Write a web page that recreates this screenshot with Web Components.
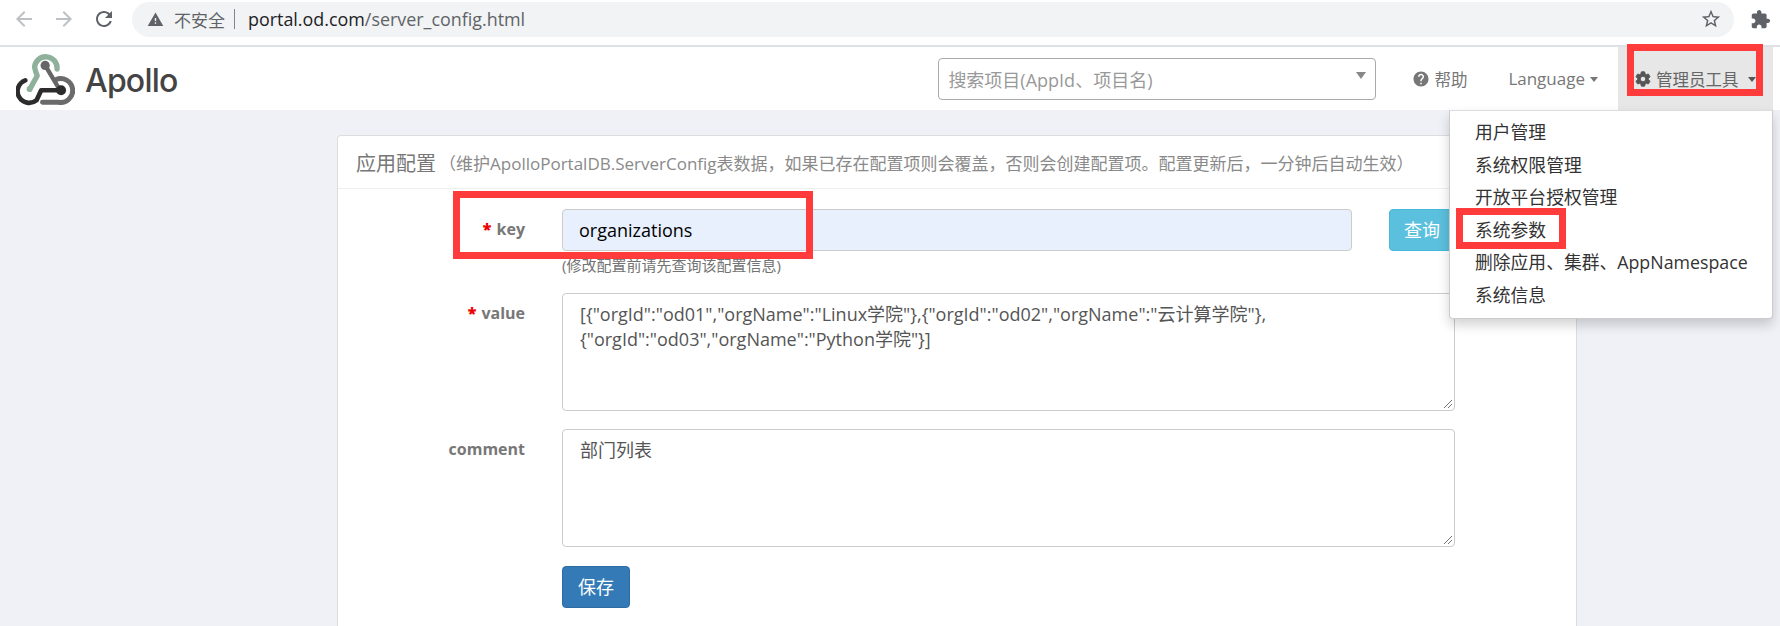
<!DOCTYPE html>
<html lang="zh">
<head>
<meta charset="utf-8">
<title>Apollo</title>
<style>
  html, body { margin: 0; height: 626px; overflow: hidden; }
  body {
    position: relative;
    background: #eff1f7;
    color: #555;
    font-family: "Open Sans", "Noto Sans CJK SC", sans-serif;
  }
</style>
</head>
<body>
<browser-bar url-host="portal.od.com" url-path="/server_config.html"></browser-bar>
<app-navbar>
  <nav-menu>
    <menu-item>用户管理</menu-item>
    <menu-item>系统权限管理</menu-item>
    <menu-item>开放平台授权管理</menu-item>
    <menu-item>系统参数</menu-item>
    <menu-item>删除应用、集群、AppNamespace</menu-item>
    <menu-item>系统信息</menu-item>
  </nav-menu>
</app-navbar>
<config-panel heading="应用配置" note="（维护ApolloPortalDB.ServerConfig表数据，如果已存在配置项则会覆盖，否则会创建配置项。配置更新后，一分钟后自动生效）">
  <form-row label="key" required hint="(修改配置前请先查询该配置信息)">
    <text-field filled>organizations</text-field>
    <app-button slot="after" kind="info">查询</app-button>
  </form-row>
  <form-row label="value" required>
    <text-area rows-height="118">[{"orgId":"od01","orgName":"Linux学院"},{"orgId":"od02","orgName":"云计算学院"},
{"orgId":"od03","orgName":"Python学院"}]</text-area>
  </form-row>
  <form-row label="comment">
    <text-area rows-height="118">部门列表</text-area>
  </form-row>
  <form-row>
    <app-button kind="primary">保存</app-button>
  </form-row>
</config-panel>

<red-mark x="1627" y="44" w="136" h="52"></red-mark>
<red-mark x="453" y="191" w="360" h="68"></red-mark>
<red-mark x="1456" y="208" w="110" h="41"></red-mark>

<script>
const icon = (d, size, color, extra = '') =>
  `<svg width="${size}" height="${size}" viewBox="0 0 24 24" fill="${color}" ${extra}><path d="${d}"/></svg>`;

const ICONS = {
  back: 'M20 11H7.83l5.59-5.59L12 4l-8 8 8 8 1.41-1.41L7.83 13H20v-2z',
  forward: 'M12 4l-1.41 1.41L16.17 11H4v2h12.17l-5.58 5.59L12 20l8-8z',
  reload: 'M17.65 6.35C16.2 4.9 14.21 4 12 4c-4.42 0-7.99 3.58-7.99 8s3.57 8 7.99 8c3.73 0 6.84-2.55 7.73-6h-2.08c-.82 2.33-3.04 4-5.65 4-3.31 0-6-2.69-6-6s2.69-6 6-6c1.66 0 3.14.69 4.22 1.78L13 11h7V4l-2.35 2.35z',
  warning: 'M1 21h22L12 2 1 21zm12-3h-2v-2h2v2zm0-4h-2v-4h2v4z',
  star: 'M22 9.24l-7.19-.62L12 2 9.19 8.63 2 9.24l5.46 4.73L5.82 21 12 17.27 18.18 21l-1.63-7.03L22 9.24zM12 15.4l-3.76 2.27 1-4.28-3.32-2.88 4.38-.38L12 6.1l1.71 4.04 4.38.38-3.32 2.88 1 4.28L12 15.4z',
  puzzle: 'M20.5 11H19V7c0-1.1-.9-2-2-2h-4V3.5C13 2.12 11.88 1 10.5 1S8 2.12 8 3.5V5H4c-1.1 0-1.99.9-1.99 2v3.8H3.5c1.49 0 2.7 1.21 2.7 2.7s-1.21 2.7-2.7 2.7H2V20c0 1.1.9 2 2 2h3.8v-1.5c0-1.49 1.21-2.7 2.7-2.7 1.49 0 2.7 1.21 2.7 2.7V22H17c1.1 0 2-.9 2-2v-4h1.5c1.38 0 2.5-1.12 2.5-2.5S21.88 11 20.5 11z',
  help: 'M12 2C6.48 2 2 6.48 2 12s4.48 10 10 10 10-4.48 10-10S17.52 2 12 2zm1 17h-2v-2h2v2zm2.07-7.75l-.9.92C13.45 12.9 13 13.5 13 15h-2v-.5c0-1.1.45-2.1 1.17-2.83l1.24-1.26c.37-.36.59-.86.59-1.41 0-1.1-.9-2-2-2s-2 .9-2 2H8c0-2.21 1.79-4 4-4s4 1.79 4 4c0 .88-.36 1.68-.93 2.25z',
  cog: 'M19.14 12.94c.04-.3.06-.61.06-.94 0-.32-.02-.64-.07-.94l2.03-1.58c.18-.14.23-.41.12-.61l-1.92-3.32c-.12-.22-.37-.29-.59-.22l-2.39.96c-.5-.38-1.03-.7-1.62-.94l-.36-2.54c-.04-.24-.24-.41-.48-.41h-3.84c-.24 0-.43.17-.47.41l-.36 2.54c-.59.24-1.13.57-1.62.94l-2.39-.96c-.22-.08-.47 0-.59.22L2.74 8.87c-.12.21-.08.47.12.61l2.03 1.58c-.05.3-.09.63-.09.94s.02.64.07.94l-2.03 1.58c-.18.14-.23.41-.12.61l1.92 3.32c.12.22.37.29.59.22l2.39-.96c.5.38 1.03.7 1.62.94l.36 2.54c.05.24.24.41.48.41h3.84c.24 0 .44-.17.47-.41l.36-2.54c.59-.24 1.13-.56 1.62-.94l2.39.96c.22.08.47 0 .59-.22l1.92-3.32c.12-.22.07-.47-.12-.61l-2.01-1.58zM12 15.6c-1.98 0-3.6-1.62-3.6-3.6s1.62-3.6 3.6-3.6 3.6 1.62 3.6 3.6-1.62 3.6-3.6 3.6z'
};

class BrowserBar extends HTMLElement {
  connectedCallback() {
    this.attachShadow({ mode: 'open' }).innerHTML = `
      <style>
        :host {
          display: flex;
          align-items: center;
          box-sizing: border-box;
          height: 47px;
          padding: 0 6px 7px 12px;
          background: #fff;
          border-bottom: 2px solid #dee1e6;
          font-family: "Open Sans", "Noto Sans CJK SC", sans-serif;
        }
        .nav { display: flex; gap: 16px; align-items: center; }
        svg { display: block; flex: none; }
        .omnibox {
          display: flex;
          align-items: center;
          width: 1602px;
          height: 35px;
          margin-left: 16px;
          padding: 0 12px 0 15px;
          box-sizing: border-box;
          background: #f1f3f4;
          border-radius: 18px;
          font-size: 17px;
          color: #5f6368;
          white-space: nowrap;
        }
        .warn { margin-right: 10px; }
        .sep { width: 1px; height: 20px; background: #80868b; margin: 0 13px 0 9px; }
        .url { font-size: 17.9px; }
        .host { color: #202124; }
        .star { margin-left: auto; }
        .ext { margin-left: 16px; }
      </style>
      <div class="nav">
        ${icon(ICONS.back, 24, '#bdc1c6')}
        ${icon(ICONS.forward, 24, '#bdc1c6')}
        ${icon(ICONS.reload, 24, '#5f6368')}
      </div>
      <div class="omnibox">
        ${icon(ICONS.warning, 17, '#5f6368', 'class="warn"')}
        <span>不安全</span><span class="sep"></span>
        <span class="url"><span class="host">${this.getAttribute('url-host')}</span>${this.getAttribute('url-path')}</span>
        ${icon(ICONS.star, 22, '#5f6368', 'class="star"')}
      </div>
      ${icon(ICONS.puzzle, 21, '#5f6368', 'class="ext"')}
    `;
  }
}

class AppNavbar extends HTMLElement {
  connectedCallback() {
    this.attachShadow({ mode: 'open' }).innerHTML = `
      <style>
        :host {
          display: flex;
          align-items: center;
          position: relative;
          height: 63px;
          padding: 0 7px 0 16px;
          background: #fff;
          font-family: "Open Sans", "Noto Sans CJK SC", sans-serif;
          color: #777;
        }
        .brand { display: flex; align-items: center; gap: 10px; }
        .brand svg { display: block; }
        .brand span {
          font: 500 32px/1 Inter, "Open Sans", sans-serif;
          letter-spacing: -.8px;
          color: #444;
          margin-top: 4px;
        }
        .search {
          display: flex;
          align-items: center;
          box-sizing: border-box;
          width: 438px;
          height: 42px;
          margin-left: auto;
          padding: 0 9px;
          border: 1px solid #aaa;
          border-radius: 4px;
          font-size: 18px;
          color: #999;
          white-space: nowrap;
        }
        .search i {
          margin-left: auto;
          margin-bottom: 6px;
          border: 5px solid transparent;
          border-top: 7px solid #888;
          border-bottom: 0;
        }
        .item {
          display: flex;
          align-items: center;
          font-size: 16.5px;
          white-space: nowrap;
        }
        .help { margin-left: 36px; gap: 4px; }
        .lang { margin-left: 41px; gap: 5px; font-size: 17px; }
        .admin {
          align-self: stretch;
          width: 155px;
          box-sizing: border-box;
          margin-left: 20px;
          padding-left: 16px;
          background: #e7e7e7;
          color: #666;
          gap: 4px;
        }
        .caret {
          border: 4px solid transparent;
          border-top: 5px solid currentColor;
          border-bottom: 0;
          margin-top: 2px;
        }
        .admin .caret { margin-left: 5px; color: #555; }
        svg { flex: none; }
      </style>
      <div class="brand">
        <svg width="59" height="56" viewBox="12 12 178 168" fill="none" stroke-linecap="round" stroke-linejoin="round">
          <path d="M136 66A34 34 0 1 0 68 60Q72 78 76 86L54 126" stroke="#8fb09b" stroke-width="16"/>
          <circle cx="53" cy="126" r="9" fill="#8fb09b"/>
          <path d="M132 98A36 36 0 1 1 140 166H92" stroke="#6b6b6b" stroke-width="15"/>
          <path d="M100 55L145 130" stroke="#666" stroke-width="13"/>
          <circle cx="100" cy="55" r="14" fill="#666"/>
          <path d="M40 100A35 35 0 1 0 74 160L88 130H148" stroke="#2c2c2c" stroke-width="14"/>
          <circle cx="148" cy="130" r="15" fill="#2c2c2c"/>
        </svg>
        <span>Apollo</span>
      </div>
      <div class="search">搜索项目(AppId、项目名)<i></i></div>
      <div class="item help">${icon(ICONS.help, 18, '#777')}帮助</div>
      <div class="item lang">Language<span class="caret"></span></div>
      <div class="item admin">${icon(ICONS.cog, 18, '#555', 'stroke="#555" stroke-width="1.2"')}管理员工具<span class="caret"></span></div>
      <slot></slot>
    `;
  }
}

class NavMenu extends HTMLElement {
  connectedCallback() {
    this.attachShadow({ mode: 'open' }).innerHTML = `
      <style>
        :host {
          display: block;
          position: absolute;
          z-index: 5;
          top: 63px;
          right: 7px;
          box-sizing: border-box;
          width: 324px;
          height: 209px;
          padding: 5px 0;
          background: #fff;
          border: 1px solid #ccc;
          border-top-color: #ddd;
          border-radius: 0 0 4px 4px;
          box-shadow: 0 6px 12px rgba(0,0,0,.175);
        }
      </style>
      <slot></slot>
    `;
  }
}

class MenuItem extends HTMLElement {
  connectedCallback() {
    this.attachShadow({ mode: 'open' }).innerHTML = `
      <style>
        :host {
          display: block;
          padding-left: 25px;
          font-size: 17.8px;
          line-height: 32.6px;
          color: #333;
          white-space: nowrap;
        }
      </style>
      <slot></slot>
    `;
  }
}

class ConfigPanel extends HTMLElement {
  connectedCallback() {
    this.attachShadow({ mode: 'open' }).innerHTML = `
      <style>
        :host {
          display: block;
          box-sizing: border-box;
          width: 1240px;
          height: 491px;
          margin: 25px 0 0 337px;
          background: #fff;
          border: 1px solid #ddd;
          border-bottom: 0;
          border-radius: 4px 4px 0 0;
        }
        header {
          height: 53px;
          box-sizing: border-box;
          padding: 0 18px;
          display: flex;
          align-items: center;
          border-bottom: 1px solid #eee;
          color: #777;
          white-space: nowrap;
        }
        h2 { margin: 0; font-size: 20px; font-weight: 400; }
        small { font-size: 17px; color: #8a8a8a; margin-left: 3px; }
        .body { padding-top: 20px; display: grid; row-gap: 18px; }
      </style>
      <header><h2>${this.getAttribute('heading')}</h2><small>${this.getAttribute('note')}</small></header>
      <div class="body"><slot></slot></div>
    `;
  }
}

class FormRow extends HTMLElement {
  connectedCallback() {
    const label = this.getAttribute('label') || '';
    const hint = this.getAttribute('hint');
    this.attachShadow({ mode: 'open' }).innerHTML = `
      <style>
        :host {
          display: grid;
          grid-template-columns: 187px 893px;
          column-gap: 37px;
        }
        label {
          padding-top: 9px;
          text-align: right;
          font-size: 16px;
          line-height: 22px;
          font-weight: 700;
          color: #777;
        }
        label b { color: #e00; margin-right: 1px; }
        .line { display: flex; gap: 37px; }
        .hint { font-size: 15px; line-height: 20px; color: #737373; margin-top: 4px; }
      </style>
      <label>${this.hasAttribute('required') ? '<b>*</b> ' : ''}${label}</label>
      <div>
        <div class="line"><slot></slot><slot name="after"></slot></div>
        ${hint ? `<div class="hint">${hint}</div>` : ''}
      </div>
    `;
  }
}

class TextField extends HTMLElement {
  connectedCallback() {
    this.attachShadow({ mode: 'open' }).innerHTML = `
      <style>
        :host {
          display: flex;
          align-items: center;
          flex: 1;
          box-sizing: border-box;
          height: 42px;
          padding: 0 16px 1px;
          border: 1px solid #ccc;
          border-radius: 4px;
          font-size: 18px;
          color: #000;
        }
        :host([filled]) { background: #e8f0fe; }
      </style>
      <slot></slot>
    `;
  }
}

class TextArea extends HTMLElement {
  connectedCallback() {
    this.attachShadow({ mode: 'open' }).innerHTML = `
      <style>
        :host {
          display: block;
          position: relative;
          flex: 1;
          box-sizing: border-box;
          height: ${this.getAttribute('rows-height')}px;
          padding: 8px 17px;
          border: 1px solid #ccc;
          border-radius: 4px;
          font-size: 18px;
          line-height: 25px;
          color: #555;
        }
        .text { white-space: pre-wrap; }
        svg { position: absolute; right: 1px; bottom: 1px; }
      </style>
      <div class="text"><slot></slot></div>
      <svg width="10" height="10" viewBox="0 0 10 10" stroke="#777" fill="none"><path d="M9 1L1 9M9 5L5 9"/></svg>
    `;
  }
}

class AppButton extends HTMLElement {
  connectedCallback() {
    this.attachShadow({ mode: 'open' }).innerHTML = `
      <style>
        :host {
          display: flex;
          align-items: center;
          justify-content: center;
          box-sizing: border-box;
          width: 68px;
          height: 42px;
          padding-bottom: 2px;
          border-radius: 4px;
          font-size: 18px;
          color: #fff;
        }
        :host([kind="info"]) { width: 66px; background: #5bc0de; border: 1px solid #46b8da; }
        :host([kind="primary"]) { margin-top: 1px; background: #337ab7; border: 1px solid #2e6da4; }
      </style>
      <slot></slot>
    `;
  }
}

// hand-drawn annotation frames of the screenshot, placed on the page as a free overlay
class RedMark extends HTMLElement {
  connectedCallback() {
    const a = n => this.getAttribute(n) + 'px';
    this.attachShadow({ mode: 'open' }).innerHTML = `
      <style>
        :host {
          display: block;
          position: absolute;
          z-index: 9;
          left: ${a('x')};
          top: ${a('y')};
          width: ${a('w')};
          height: ${a('h')};
          box-sizing: border-box;
          border: 7px solid #ff3b3b;
        }
      </style>
    `;
  }
}

customElements.define('browser-bar', BrowserBar);
customElements.define('app-navbar', AppNavbar);
customElements.define('nav-menu', NavMenu);
customElements.define('menu-item', MenuItem);
customElements.define('config-panel', ConfigPanel);
customElements.define('form-row', FormRow);
customElements.define('text-field', TextField);
customElements.define('text-area', TextArea);
customElements.define('app-button', AppButton);
customElements.define('red-mark', RedMark);
</script>
</body>
</html>
